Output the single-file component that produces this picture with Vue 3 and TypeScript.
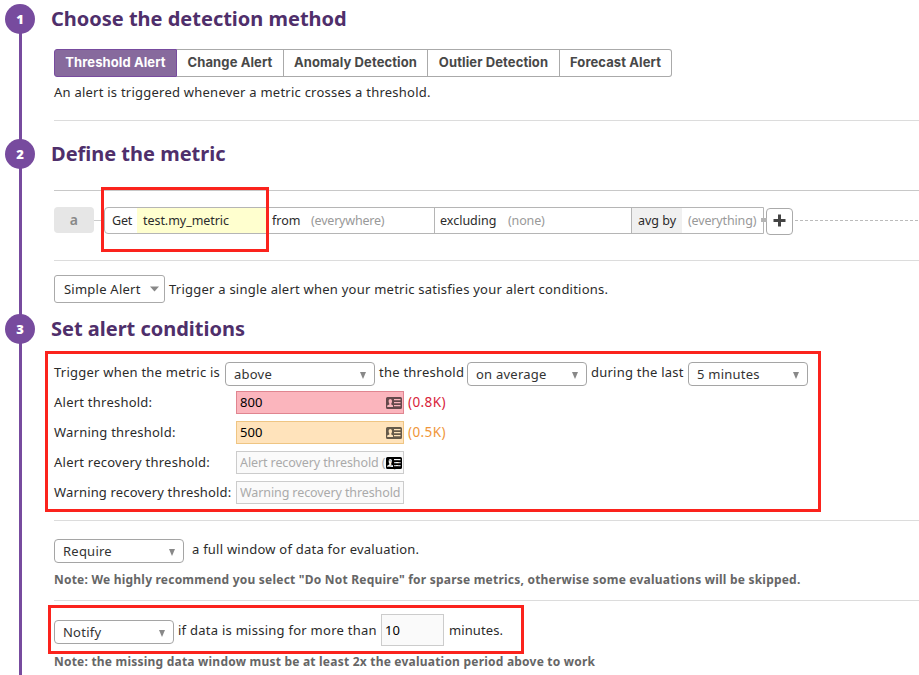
<script setup lang="ts">
import { ref } from 'vue'

interface Threshold {
  label: string
  kind: string
  value: string
  placeholder: string
  hint: string
  icon: boolean
}

const methods: { name: string; kind: string }[] = [
  { name: 'Threshold Alert', kind: 'threshold' },
  { name: 'Change Alert', kind: 'change' },
  { name: 'Anomaly Detection', kind: 'anomaly' },
  { name: 'Outlier Detection', kind: 'outlier' },
  { name: 'Forecast Alert', kind: 'forecast' },
]
const active = ref('threshold')

const thresholds = ref<Threshold[]>([
  { label: 'Alert threshold:', kind: 'alert', value: '800', placeholder: '', hint: '(0.8K)', icon: true },
  { label: 'Warning threshold:', kind: 'warning', value: '500', placeholder: '', hint: '(0.5K)', icon: true },
  { label: 'Alert recovery threshold:', kind: 'plain', value: '', placeholder: 'Alert recovery threshold (optional)', hint: '', icon: true },
  { label: 'Warning recovery threshold:', kind: 'plain last', value: '', placeholder: 'Warning recovery threshold', hint: '', icon: false },
])
const missing = ref('10')
</script>

<template>
  <main class="page">
    <section class="step first">
      <span class="num">1</span>
      <h2>Choose the detection method</h2>
      <div class="tabs">
        <button v-for="m in methods" :key="m.kind" :class="['tab', m.kind, { on: active === m.kind }]" @click="active = m.kind">
          <span>{{ m.name }}</span>
        </button>
      </div>
      <p class="desc">An alert is triggered whenever a metric crosses a threshold.</p>
      <hr />
    </section>

    <section class="step second">
      <span class="num">2</span>
      <h2>Define the metric</h2>
      <hr class="dark" />
      <div class="query">
        <span class="letter">a</span>
        <span class="link"></span>
        <div class="expr">
          <span class="get">Get</span>
          <span class="metric">test.my_metric</span>
          <span class="from">from</span>
          <span class="scope muted">(everywhere)</span>
          <span class="excl">excluding</span>
          <span class="none muted">(none)</span>
          <span class="avg">avg by</span>
          <span class="every muted">(everything)</span>
          <i class="knob"></i>
        </div>
        <button class="plus">
          <svg width="13" height="13" viewBox="0 0 13 13"><path d="M5 .5h3V5h4.500v3H8v4.500H5V8H.5V5H5z" fill="#444" /></svg>
        </button>
        <svg class="dash" height="1"><line x1="0" y1="0.5" x2="130" y2="0.5" stroke="#bbb" stroke-dasharray="3 2" /></svg>
        <div class="mark mark-metric"></div>
      </div>
      <hr />
      <div class="simple-row">
        <div class="simple"><span>Simple Alert</span><svg width="9" height="6" viewBox="0 0 9 6"><path d="M0 .5h9L4.5 5.5z" fill="#888" /></svg></div>
        <span>Trigger a single alert when your metric satisfies your alert conditions.</span>
      </div>
    </section>

    <section class="step third">
      <span class="num">3</span>
      <h2>Set alert conditions</h2>
      <div class="conditions">
        <div class="mark mark-conditions"></div>
        <div class="trigger">
          <span class="t-when">Trigger when the metric is</span>
          <div class="select w150"><span>above</span><i class="caret"></i></div>
          <span class="t-the">the threshold</span>
          <div class="select w120"><span>on average</span><i class="caret"></i></div>
          <span class="t-during">during the last</span>
          <div class="select w120"><span>5 minutes</span><i class="caret"></i></div>
        </div>
        <div v-for="t in thresholds" :key="t.label" :class="['threshold', t.kind]">
          <label>{{ t.label }}</label>
          <div class="field">
            <input v-model="t.value" :placeholder="t.placeholder" />
            <svg v-if="t.icon" class="card" width="16" height="12" viewBox="0 0 16 12">
              <path fill-rule="evenodd" d="M1.5 0h13Q16 0 16 1.5v9q0 1.500-1.500 1.500h-13Q0 12 0 10.500v-9Q0 0 1.500 0zM1.200 10H7V8.500L5.300 7.400V6.500Q6.200 5.500 6 3.700 5.800 2 4.300 2 2.700 2 2.600 3.700 2.500 5.500 3.300 6.500v.900L1.200 8.500zM8 2v1.200h6.500V2zM8 5v1.200h6.500V5zM8 8v1.200h6.500V8z" />
            </svg>
          </div>
          <span class="hint">{{ t.hint }}</span>
        </div>
      </div>
      <hr />
      <div class="require">
        <div class="select w130"><span>Require</span><i class="caret"></i></div>
        <span class="t-full">a full window of data for evaluation.</span>
      </div>
      <p class="note n1">Note: We highly recommend you select "Do Not Require" for sparse metrics, otherwise some evaluations will be skipped.</p>
      <hr />
      <div class="notify">
        <div class="mark mark-notify"></div>
        <div class="select w120"><span>Notify</span><i class="caret"></i></div>
        <span class="t-missing">if data is missing for more than</span>
        <input v-model="missing" class="minutes" />
        <span class="t-min">minutes.</span>
      </div>
      <p class="note n2">Note: the missing data window must be at least 2x the evaluation period above to work</p>
    </section>
  </main>
</template>

<style>
body { margin: 0; background: #fff; overflow: hidden; }
</style>

<style scoped>
* { box-sizing: border-box; }
.page { width: 919px; height: 675px; overflow: hidden; font: 13px/18px 'Noto Sans', 'Open Sans', sans-serif; letter-spacing: .235px; color: #2b2b2b; white-space: nowrap; }
.step { position: relative; padding-left: 54px; }
.step::before { content: ''; position: absolute; left: 19px; top: 0; bottom: 0; width: 3px; background: #774b9e; }
.first::before { top: 10px; }
.first { height: 135px; }
.second { height: 175px; }
.third { height: 365px; }
.num { position: absolute; left: 5px; top: 4px; width: 30px; height: 30px; border-radius: 50%; background: #774b9e; color: #fff; font: 800 13px/30px 'Open Sans', sans-serif; letter-spacing: 0; text-align: center; }
h2 { margin: 0 0 0 -3px; height: 37px; font-size: 20px; line-height: 37px; font-weight: 700; letter-spacing: -.01px; color: #4f2f6b; }
hr { height: 1px; margin: 0; border: 0; background: #dcdcdc; }
hr.dark { background: #c8c8c8; }
button { padding: 0; margin: 0; background: #fff; }

.tabs { display: flex; height: 28px; margin-top: 12px; }
.tab { height: 28px; padding-bottom: 1px; border: 1px solid #aaa; border-left-width: 0; font: 700 13px/25px Inter, sans-serif; letter-spacing: .1px; color: #484848; text-align: center; }
.tab.on { background: #876a9d; border-color: #774b9e; border-left-width: 1px; color: #fff; }
.tab.threshold { display: block; width: 123px; border-radius: 3px 0 0 3px; }
.tab.change { width: 107px; }
.tab.anomaly { width: 144px; }
.tab.outlier { width: 132px; }
.tab.forecast { width: 112px; border-radius: 0 3px 3px 0; }
.desc { margin: 6px 0 19px; }

.second hr.dark { margin-top: 18px; }
.query { position: relative; display: flex; height: 69px; padding-top: 16px; align-items: flex-start; }
.letter { width: 40px; height: 26px; border-radius: 4px; background: #e6e6e6; color: #888; font-size: 14px; font-weight: 600; line-height: 25px; text-align: center; }
.link { width: 10px; height: 1px; margin-top: 13px; background: #ccc; }
.expr { position: relative; display: flex; width: 660px; height: 27px; border: 1px solid #b5b5b5; border-radius: 4px 0 0 4px; line-height: 25px; font-size: 12.5px; letter-spacing: 0; }
.muted { color: #999; }
.get { width: 32px; padding-left: 7px; letter-spacing: -.2px; }
.metric { width: 131px; padding-left: 6px; background: #ffffcf; letter-spacing: -.05px; }
.from { width: 38px; padding-left: 4px; }
.scope { width: 129px; padding-left: 5px; border-right: 1px solid #b5b5b5; letter-spacing: -.2px; }
.excl { width: 67px; padding-left: 5px; }
.none { width: 130px; padding-left: 6px; border-right: 1px solid #b5b5b5; letter-spacing: -.15px; }
.avg { width: 50px; padding-left: 6px; background: #f0f0f0; }
.every { padding-left: 6px; letter-spacing: -.15px; }
.knob { position: absolute; left: 656px; top: 10px; width: 6px; height: 4px; background: #b5b5b5; }
.plus { display: flex; align-items: center; justify-content: center; width: 27px; height: 27px; margin: 1px 2px 0; padding-bottom: 2px; border: 1px solid #aaa; border-radius: 4px; }
.dash { flex: 1; margin-top: 13px; }
.mark { position: absolute; z-index: 2; border: 3px solid #fb231d; pointer-events: none; }
.mark-metric { left: 47px; top: -4px; width: 168px; height: 65px; }
.simple-row { display: flex; align-items: center; height: 28px; margin-top: 14px; }
.simple { display: flex; align-items: center; justify-content: space-between; width: 111px; height: 28px; margin-right: 4px; padding: 0 5px 0 9px; border: 1px solid #aaa; border-radius: 3px; }

.conditions { position: relative; height: 173px; padding-top: 15px; }
.mark-conditions { left: -9px; top: 4px; width: 776px; height: 161px; }
.trigger { display: flex; height: 24px; margin-bottom: 5px; }
.trigger > span { line-height: 20px; }
.t-when { width: 171px; }
.t-the { width: 92px; padding-left: 4px; }
.t-during { width: 101px; padding-left: 4px; }
.select { display: flex; align-items: center; justify-content: space-between; height: 24px; padding: 0 8px 0 8px; border: 1px solid #a5a5a5; border-radius: 4px; background: #fff; color: #333; }
.w150 { width: 150px; }
.w130 { width: 130px; }
.w120 { width: 120px; }
.caret { width: 0; height: 0; margin-top: 2px; border: 3.5px solid transparent; border-top: 7px solid #888; border-bottom: 0; }
.threshold { display: flex; }
.conditions .threshold { height: 30px; }
.threshold label { width: 182px; line-height: 22px; }
.threshold.last label { letter-spacing: .16px; }
.field { position: relative; width: 168px; height: 23px; }
input { display: block; padding: 0 3px; border: 1px solid #ccc; border-radius: 0; outline: 0; background: #fafafa; color: #000; font: inherit; letter-spacing: .1px; }
.field input { width: 168px; height: 23px; padding-bottom: 2px; }
input::placeholder { color: #aaa; opacity: 1; }
.conditions .plain input { padding-bottom: 0; font-size: 12.5px; letter-spacing: -.1px; }
.alert input { background: #fbb5bd; border-color: #e08590; }
.warning input { background: #ffe3bb; border-color: #efc583; }
.card { position: absolute; right: 2px; top: 6px; }
.alert .card, .warning .card { opacity: .6; }
.hint { margin-left: 4px; line-height: 22px; font-size: 13.5px; letter-spacing: .4px; }
.alert .hint { color: #d8233b; }
.warning .hint { color: #f0963a; }
.require { display: flex; height: 24px; margin-top: 18px; }
.require .t-full { line-height: 21px; padding-left: 8px; }
.note { margin: 0; font-size: 12px; font-weight: 700; letter-spacing: .215px; color: #666; }
.n1 { margin: 8px 0 11px; }
.notify { position: relative; display: flex; height: 45px; padding-top: 13px; }
.mark-notify { left: -6px; top: 4px; width: 476px; height: 49px; }
.notify .select { margin-top: 6px; }
.t-missing { width: 207px; padding-left: 4px; line-height: 32px; letter-spacing: .26px; }
.minutes { width: 63px; height: 32px; }
.t-min { padding-left: 5px; line-height: 32px; letter-spacing: .1px; }
.n2 { margin-top: 7px; }
</style>
